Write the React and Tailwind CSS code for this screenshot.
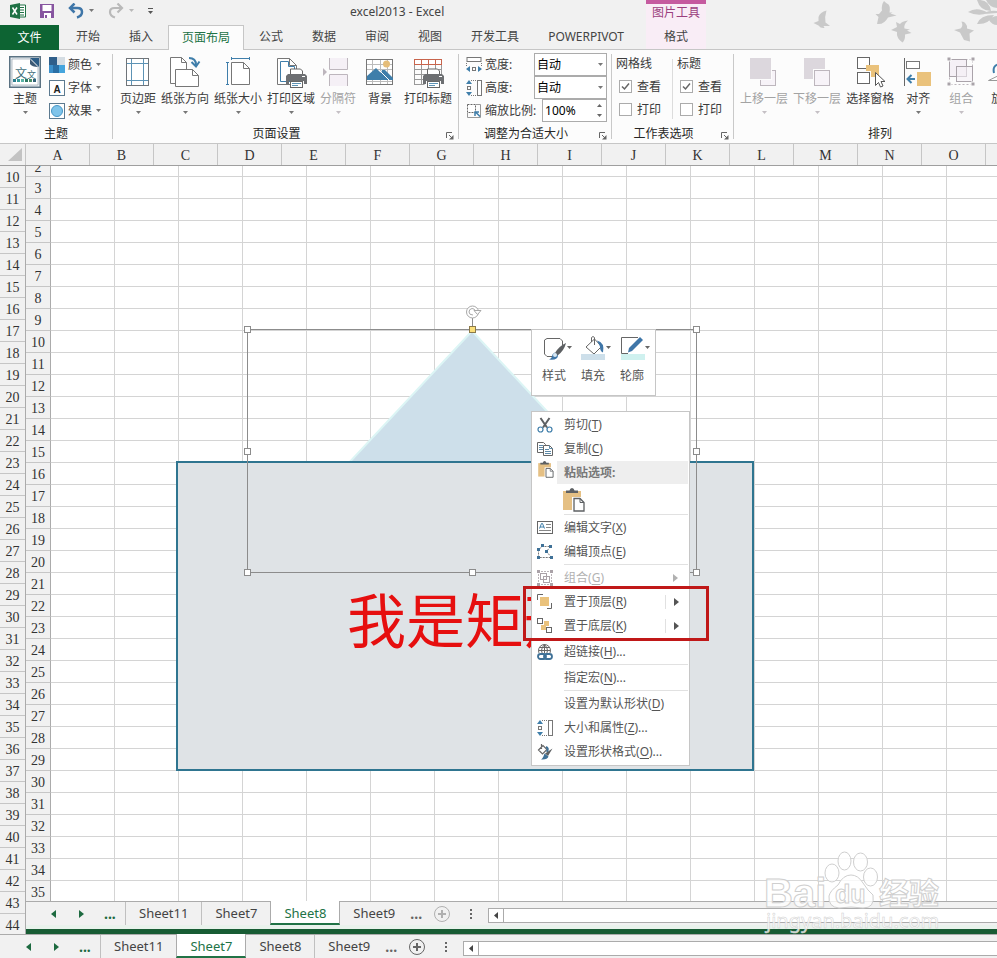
import React, { useState } from "react";

const COLUMNS = "ABCDEFGHIJKLMNOP".split("");
const OUTER_ROWS = Array.from({ length: 35 }, (_, i) => i + 10);
const INNER_ROWS = Array.from({ length: 33 }, (_, i) => i + 3);
const SHEETS = ["Sheet11", "Sheet7", "Sheet8", "Sheet9"];
const TABS = ["开始", "插入", "页面布局", "公式", "数据", "审阅", "视图", "开发工具", "POWERPIVOT"];

/* ---------- Small helpers ---------- */

const Svg = ({ size = 16, children, className = "" }) => (
    <svg
        width={size}
        height={size}
        viewBox={`0 0 ${size} ${size}`}
        fill="none"
        aria-hidden="true"
        className={`shrink-0 ${className}`}
    >
        {children}
    </svg>
);

const Caret = ({ className = "text-[#777]" }) => (
    <svg width="5" height="3" viewBox="0 0 5 3" aria-hidden="true" className={`shrink-0 ${className}`}>
        <path d="M0 0h5L2.500 3z" fill="currentColor" />
    </svg>
);

/* ---------- Ribbon icons (32px) ---------- */

const ThemeIcon = () => (
    <Svg size={32}>
        <rect x="0.750" y="0.750" width="30.500" height="30.500" fill="#e9eef2" stroke="#5b7282" strokeWidth="1.500" />
        <path d="M3 3h26v26H3z" fill="#fff" stroke="#8a98a3" strokeWidth="0.600" />
        <path d="M21 2h9v9z" fill="#2c5c85" />
        <path d="M21 3v5q2 3 8 3z" fill="#3d5a75" />
        <text x="6" y="21.500" fontSize="12" fill="#42707c">文</text>
        <text x="18" y="21.500" fontSize="9" fill="#42707c">文</text>
        <path d="M4 23h3v3H4z" fill="#2b7c8c" />
        <path d="M8 23h3v3H8z" fill="#3a9c9a" />
        <path d="M12 23h3v3h-3z" fill="#5ab3a5" />
        <path d="M16 23h3v3h-3z" fill="#2f7a64" />
        <path d="M20 23h3v3h-3z" fill="#4d8f67" />
        <path d="M24 23h3v3h-3z" fill="#34637a" />
    </Svg>
);

const MarginsIcon = () => (
    <Svg size={32}>
        <rect x="4.500" y="2.500" width="22" height="27" fill="#fff" stroke="#6f7479" />
        <path d="M9.500 3v26M21.500 3v26M5 7.500h21M5 24.500h21" stroke="#5d93b5" />
    </Svg>
);

const OrientationIcon = () => (
    <Svg size={32}>
        <path d="M1.500 1.500h11l5 5v21h-16z" fill="#fff" stroke="#777" />
        <path d="M12.500 1.500v5h5" stroke="#777" />
        <path d="M6.500 13.500h17l6 6v11h-23z" fill="#fff" stroke="#777" />
        <path d="M23.500 13.500v6h6" stroke="#777" />
        <path d="M20 2q7 0 7 7" stroke="#3f7eaa" strokeWidth="2" />
        <path d="M22.500 6l4.500 4.500L30.500 5.500" stroke="#3f7eaa" strokeWidth="2" />
    </Svg>
);

const PageSizeIcon = () => (
    <Svg size={32}>
        <path d="M9 2.500h19M9.500 1v3M27.500 1v3M5.500 6v23M4 6.500h3M4 28.500h3" stroke="#3f7eaa" />
        <path d="M9.500 6.500h12l6 6v16h-18z" fill="#fff" stroke="#777" />
        <path d="M21.500 6.500v6h6" stroke="#777" />
    </Svg>
);

const Printer = () => (
    <g>
        <path d="M15.500 20v-7h10l2 2v5z" fill="#fff" stroke="#666" />
        <path d="M13 18h17l2 2v8h-3v-3H14v3h-3v-8z" fill="#6d6f72" />
        <rect x="15.500" y="25.500" width="12" height="6" fill="#fff" stroke="#666" />
        <path d="M17 27.500h9M17 29.500h6" stroke="#5d93b5" />
        <path d="M27 20.500h3" stroke="#fff" />
    </g>
);

const PrintAreaIcon = () => (
    <Svg size={32}>
        <path d="M2.500 2.500h12l7 7v19h-19z" fill="#fff" stroke="#777" />
        <path d="M14.500 2.500v7h7" stroke="#777" />
        <path d="M5.500 5.500h8v5h6v15h-14z" stroke="#3f7eaa" />
        <Printer />
    </Svg>
);

const BreaksIcon = () => (
    <Svg size={32}>
        <path d="M7.500 2v11.500h18V2M7.500 30V18.500h18V30" fill="#f5f0f6" stroke="#bdb6bd" />
        <path d="M1 12l4 4-4 4z" fill="#bdb6bd" />
    </Svg>
);

const BackgroundIcon = () => (
    <Svg size={32}>
        <rect x="2.500" y="3.500" width="26" height="25" fill="#fff" stroke="#777" />
        <path d="M3 8.500h25M3 13.500h25M8.500 4v24M16.500 4v24M23.500 4v24M3 25.500h25" stroke="#bbb" />
        <circle cx="22.500" cy="8" r="3.500" fill="#e5bd79" />
        <path d="M3 24v-4l9-8 5 5 1-3 3 0 8 8v2z" fill="#3f7eaa" />
        <path d="M16 15l9 9" stroke="#fff" />
    </Svg>
);

const PrintTitlesIcon = () => (
    <Svg size={32}>
        <path d="M2.500 8v21M2.500 28.500h10M9.500 8v21M16.500 8v10M23.500 8v10M29.500 8v10M3 13.500h27M3 18.500h27M3 23.500h10" stroke="#999" />
        <rect x="2.500" y="3.500" width="27" height="5" fill="#fff" stroke="#c8644c" />
        <path d="M9.500 4v4M16.500 4v4M23.500 4v4" stroke="#c8644c" />
        <Printer />
    </Svg>
);

const ForwardIcon = () => (
    <Svg size={32}>
        <rect x="12.500" y="14.500" width="15" height="15" fill="#f7f3f8" stroke="#bdb6bd" />
        <path d="M1 1h23v23H1z" fill="#fcfcfc" />
        <path d="M2 2h21v21H2z" fill="#dcd7dd" />
    </Svg>
);

const BackwardIcon = () => (
    <Svg size={32}>
        <path d="M3 2h21v21H3z" fill="#dcd7dd" />
        <path d="M12 13h18v18H12z" fill="#fcfcfc" />
        <rect x="13.500" y="14.500" width="15" height="15" fill="#f7f3f8" stroke="#bdb6bd" />
    </Svg>
);

const SelectionPaneIcon = () => (
    <Svg size={32}>
        <rect x="3.500" y="1.500" width="12" height="11" fill="#fff" stroke="#666" />
        <rect x="3.500" y="16.500" width="12" height="11" fill="#fff" stroke="#666" />
        <path d="M12 9h13v12h-8v-6h-5z" fill="#eac27c" />
        <path d="M21.500 16.500v13l3-3 2 4.500 2.500-1-2-4.500h4z" fill="#fff" stroke="#555" />
    </Svg>
);

const AlignIcon = () => (
    <Svg size={32}>
        <path d="M2.500 2v28" stroke="#666" />
        <rect x="4.500" y="5.500" width="13" height="7" fill="#fff" stroke="#777" />
        <path d="M15 16h14v14H15z" fill="#eac27c" />
        <path d="M13 23H6M9.500 19L5.500 23l4 4" stroke="#3f7eaa" strokeWidth="2" />
    </Svg>
);

const GroupIcon = () => (
    <Svg size={32}>
        <path d="M4.500 3.500h23v25h-23z" stroke="#bdb6bd" strokeDasharray="2 2" />
        <rect x="4.500" y="3.500" width="17" height="17" fill="#f5f0f6" stroke="#aaa3aa" />
        <rect x="11.500" y="10.500" width="16" height="15" fill="#f5f0f6" fillOpacity="0.600" stroke="#aaa3aa" />
        <path d="M2 1h4v4H2zM26 1h4v4h-4zM2 26h4v4H2zM26 26h4v4h-4z" fill="#a9a3a9" stroke="#fcfcfc" />
    </Svg>
);

const RotateIcon = () => (
    <Svg size={32}>
        <path d="M7 17Q5 9 13 8" stroke="#3f7eaa" strokeWidth="2" />
        <path d="M1.500 24.500L17 17v7.500z" fill="#fff" stroke="#999" />
    </Svg>
);

/* ---------- 16px icons ---------- */

const ColorsIcon = () => (
    <Svg>
        <path d="M0 0h8v8H0z" fill="#2f5f8a" />
        <path d="M8 0h8v8H8z" fill="#d5dde3" />
        <path d="M0 8h4v8H0z" fill="#3c8fc9" />
        <path d="M4 8h6v8H4z" fill="#2a6fa5" />
        <path d="M10 8h6v8h-6z" fill="#45a5dd" />
    </Svg>
);

const FontsIcon = () => (
    <Svg>
        <rect x="0.500" y="0.500" width="15" height="15" fill="#fff" stroke="#5c7a90" />
        <text x="4.500" y="12.500" fontSize="10" fontWeight="700" fill="#222" fontFamily="Liberation Sans, sans-serif">A</text>
    </Svg>
);

const EffectsIcon = () => (
    <Svg>
        <rect x="0.500" y="0.500" width="15" height="15" fill="#fff" stroke="#5c7a90" />
        <circle cx="8" cy="8" r="5.500" fill="#7fc4ea" stroke="#4696c6" />
    </Svg>
);

const WidthIcon = () => (
    <Svg>
        <rect x="1" y="0.500" width="14" height="4" fill="#fff" stroke="#777" />
        <path d="M0.500 6v3M15.500 6v3" stroke="#777" strokeDasharray="1 1" />
        <path d="M0 12l4-3v6zM16 12l-4-3v6z" fill="#3f7eaa" />
        <rect x="6.500" y="10.500" width="3" height="3" stroke="#777" />
    </Svg>
);

const HeightIcon = () => (
    <Svg>
        <rect x="11.500" y="0.500" width="4" height="15" fill="#fff" stroke="#777" />
        <path d="M5 0.500h5M5 15.500h5" stroke="#777" strokeDasharray="1 1" />
        <path d="M3 0L0 4h6zM3 16l-3-4h6z" fill="#3f7eaa" />
        <rect x="1.500" y="6.500" width="3" height="3" stroke="#777" />
    </Svg>
);

const ScaleIcon = () => (
    <Svg>
        <path d="M10 1.500h4.500v13h-13V10" stroke="#999" />
        <rect x="1.500" y="1.500" width="8" height="8" fill="#fff" stroke="#666" strokeDasharray="2 1" />
        <path d="M14 13.500L9.500 9M9 13V9h4" stroke="#3f7eaa" strokeWidth="1.500" />
    </Svg>
);

const CutIcon = () => (
    <Svg>
        <path d="M3.500 1l6.500 9.500M12.500 1L6 10.500" stroke="#5d6063" strokeWidth="2" />
        <circle cx="3.500" cy="12.500" r="2.500" stroke="#3f7eaa" strokeWidth="1.200" />
        <circle cx="12.500" cy="12.500" r="2.500" stroke="#3f7eaa" strokeWidth="1.200" />
    </Svg>
);

const CopyIcon = () => (
    <Svg>
        <path d="M0.500 1.500h6l2 2v8h-8z" fill="#fff" stroke="#666" />
        <path d="M2 4.500h4M2 6.500h4M2 8.500h4" stroke="#5d8aa8" />
        <path d="M6.500 4.500h6l3 3v7h-9z" fill="#fff" stroke="#666" />
        <path d="M12.500 4.500v3h3M8 8.500h4M8 10.500h6M8 12.500h6" stroke="#5d8aa8" />
    </Svg>
);

const PasteIcon = ({ big }) => (
    <svg width={big ? 22 : 16} height={big ? 24 : 17} viewBox="0 0 22 24" fill="none" aria-hidden="true" className="shrink-0">
        <path d="M0 3h18v19H0z" fill="#e5c084" />
        <path d="M3 5V2.500h3.500Q7 0 9 0t2.500 2.500H15V5z" fill="#5d6063" />
        <path d="M9 9h13v15H9z" fill="#fff" />
        <path d="M11 10.500h6l4 4v8.500H11z" fill="#fff" stroke="#5d6063" strokeWidth="1.300" />
        <path d="M17 10.500v4h4" stroke="#5d6063" />
    </svg>
);

const EditTextIcon = () => (
    <Svg>
        <rect x="0.500" y="1.500" width="15" height="12" fill="#fff" stroke="#666" />
        <path d="M2.500 8.500l2-5h1l2 5M3 7h4" stroke="#3f7eaa" />
        <path d="M9 4.500h5M9 7.500h5M2 10.500h12" stroke="#888" />
    </Svg>
);

const EditPointsIcon = () => (
    <Svg>
        <path d="M1.500 13.500v-8l4-3h8l-4 5 5 6z" stroke="#777" strokeDasharray="2 1" />
        <path d="M0 4h3v3H0zM4 0h3v3H4zM12 1h3v3h-3zM8 6h3v3H8zM0 12h3v3H0zM13 12h3v3h-3z" fill="#3f7197" />
    </Svg>
);

const GroupSmallIcon = () => (
    <Svg>
        <rect x="3.500" y="3.500" width="6" height="6" stroke="#aaa2a8" />
        <rect x="6.500" y="6.500" width="6" height="6" stroke="#aaa2a8" />
        <path d="M0 0h3v3H0zM13 0h3v3h-3zM0 13h3v3H0zM13 13h3v3h-3z" fill="#aaa2a8" />
        <path d="M4 1.500h8M4 14.500h8M1.500 4v8M14.500 4v8" stroke="#bbb4b9" strokeDasharray="2 1" />
    </Svg>
);

const FrontIcon = () => (
    <Svg>
        <path d="M0.500 6V0.500H6M10 14.500h4.500V9" stroke="#666" />
        <path d="M3 3h9v9H3z" fill="#eac27c" />
    </Svg>
);

const BackIcon = () => (
    <Svg>
        <path d="M7 3h5v5H9v4H4V7h3z" fill="#eac27c" />
        <rect x="0.500" y="0.500" width="5" height="5" fill="#fff" stroke="#666" />
        <rect x="9.500" y="9.500" width="5" height="5" fill="#fff" stroke="#666" />
    </Svg>
);

const LinkIcon = () => (
    <Svg>
        <circle cx="7.500" cy="6.500" r="6" fill="#fff" stroke="#666" />
        <path d="M7.500 0.500v12M1.500 6.500h12M2.500 3.500h10M7.500 0.500q-6 6 0 12M7.500 0.500q6 6 0 12" stroke="#666" />
        <path d="M0 9h16v7H0z" fill="#fff" />
        <rect x="1" y="10" width="8" height="5" rx="2.500" stroke="#3f7197" strokeWidth="1.800" />
        <rect x="7" y="10" width="8" height="5" rx="2.500" stroke="#3f7197" strokeWidth="1.800" />
    </Svg>
);

const FormatShapeIcon = () => (
    <Svg>
        <path d="M1.500 6L6 1.500l4 4L5.500 10zM4.500 0v5" stroke="#666" strokeWidth="1.200" />
        <path d="M9 3q3 1 1 5" stroke="#3f7197" strokeWidth="2" />
        <path d="M15.500 4.500L11 12l-3-2.500z" fill="#5d6063" />
        <path d="M7.500 9.500l4 3q-1 3.500-7.500 3 2-1 3.500-6z" fill="#3f7197" />
    </Svg>
);

/* ---------- Ribbon ---------- */

const RibbonButton = ({ icon, label, disabled, noCaret, className = "" }) => (
    <button
        type="button"
        disabled={disabled}
        className={`flex shrink-0 flex-col items-center pt-[3px] whitespace-nowrap ${disabled ? "text-[#a3a3a3]" : "text-[#3b3b3b]"} ${className}`}
    >
        {icon}
        <span className="mt-px h-5 leading-5">{label}</span>
        {!noCaret && <Caret className={disabled ? "mt-[2px] text-[#c5c0c5]" : "mt-[2px] text-[#777]"} />}
    </button>
);

const RibbonGroup = ({ label, launcher, className = "", children }) => (
    <>
        <section className="flex shrink-0 flex-col pt-[3px]">
            <div className={`flex h-[72px] ${className}`}>{children}</div>
            <div className="flex h-[18px] items-center text-[#262626]">
                <span className="flex-1 text-center leading-4">{label}</span>
                {launcher && (
                    <button type="button" aria-label={`${label} 设置`} className="w-[18px] pt-1 pl-[6px]">
                        <svg width="8" height="8" viewBox="0 0 8 8" fill="none">
                            <path d="M0.500 6V0.500H6M3 3l3 3" stroke="#666" />
                            <path d="M7.500 3v4.500H3z" fill="#666" />
                        </svg>
                    </button>
                )}
            </div>
        </section>
        <div className="my-1 w-px shrink-0 bg-[#c9c9c9]" />
    </>
);

const MenuDrop = ({ icon, label }) => (
    <button type="button" className="flex h-[23px] items-center text-[#3b3b3b]">
        {icon}
        <span className="ml-[3px]">{label}</span>
        <Caret className="ml-1 text-[#777]" />
    </button>
);

const ScaleSelect = ({ id, icon, label }) => (
    <div className="flex h-[23px] items-center">
        {icon}
        <label htmlFor={id} className="ml-[3px] flex-1 text-[#3b3b3b]">{label}</label>
        <span className="relative flex items-center">
            <select id={id} className="h-[23px] w-[73px] appearance-none border border-[#ababab] bg-white pl-[2px] text-black outline-none">
                <option>自动</option>
                <option>1 页</option>
                <option>2 页</option>
            </select>
            <Caret className="pointer-events-none absolute right-1 text-[#777]" />
        </span>
    </div>
);

const Check = ({ label, group, defaultChecked }) => (
    <label className="flex h-[23px] items-center gap-[5px] text-[#3b3b3b]">
        <span className="relative flex">
            <input
                type="checkbox"
                aria-label={`${group} ${label}`}
                defaultChecked={defaultChecked}
                className="peer size-[13px] appearance-none border border-[#ababab] bg-white"
            />
            <svg viewBox="0 0 13 13" className="pointer-events-none absolute inset-0 hidden size-[13px] peer-checked:block" fill="none">
                <path d="M3 6.500L5.500 9 10 3.500" stroke="#666" strokeWidth="1.500" />
            </svg>
        </span>
        {label}
    </label>
);

const Ribbon = () => (
    <div className="flex h-[94px] shrink-0 overflow-hidden border-b border-[#c6c6c6] bg-[#fcfcfc]">
        <RibbonGroup label="主题" className="w-28 pl-[7px]">
            <RibbonButton icon={<ThemeIcon />} label="主题" className="w-9" />
            <div className="ml-[6px] flex flex-col">
                <MenuDrop icon={<ColorsIcon />} label="颜色" />
                <MenuDrop icon={<FontsIcon />} label="字体" />
                <MenuDrop icon={<EffectsIcon />} label="效果" />
            </div>
        </RibbonGroup>

        <RibbonGroup label="页面设置" launcher className="gap-[5px] pr-[6px] pl-[7px]">
            <RibbonButton icon={<MarginsIcon />} label="页边距" />
            <RibbonButton icon={<OrientationIcon />} label="纸张方向" />
            <RibbonButton icon={<PageSizeIcon />} label="纸张大小" />
            <RibbonButton icon={<PrintAreaIcon />} label="打印区域" />
            <RibbonButton icon={<BreaksIcon />} label="分隔符" disabled />
            <RibbonButton icon={<BackgroundIcon />} label="背景" noCaret className="w-[38px]" />
            <RibbonButton icon={<PrintTitlesIcon />} label="打印标题" noCaret />
        </RibbonGroup>

        <RibbonGroup label="调整为合适大小" launcher className="w-[152px] pr-1 pl-[7px]">
            <div className="flex flex-1 flex-col">
                <ScaleSelect id="page-width" icon={<WidthIcon />} label="宽度:" />
                <ScaleSelect id="page-height" icon={<HeightIcon />} label="高度:" />
                <div className="flex h-[23px] items-center">
                    <ScaleIcon />
                    <label htmlFor="page-scale" className="ml-[3px] flex-1 whitespace-nowrap text-[#3b3b3b]">缩放比例:</label>
                    <span className="flex h-[23px] w-[65px] items-center border border-[#ababab] bg-white">
                        <input id="page-scale" defaultValue="100%" className="w-12 flex-1 bg-transparent pl-[2px] text-black outline-none" />
                        <span className="flex flex-col gap-[2px] pr-1">
                            <button type="button" aria-label="增加" className="flex h-2 items-center">
                                <Caret className="rotate-180 text-[#666]" />
                            </button>
                            <button type="button" aria-label="减少" className="flex h-2 items-center">
                                <Caret className="text-[#666]" />
                            </button>
                        </span>
                    </span>
                </div>
            </div>
        </RibbonGroup>

        <RibbonGroup label="工作表选项" launcher className="w-[121px] pl-1">
            <div className="flex w-14 flex-col">
                <span className="h-[22px] leading-[22px] text-[#3b3b3b]">网格线</span>
                <div className="pl-[3px]">
                    <Check group="网格线" label="查看" defaultChecked />
                    <Check group="网格线" label="打印" />
                </div>
            </div>
            <div className="my-[6px] w-px bg-[#dcdcdc]" />
            <div className="flex flex-col pl-1">
                <span className="h-[22px] leading-[22px] text-[#3b3b3b]">标题</span>
                <div className="pl-[3px]">
                    <Check group="标题" label="查看" defaultChecked />
                    <Check group="标题" label="打印" />
                </div>
            </div>
        </RibbonGroup>

        <RibbonGroup label="排列" className="w-[292px] gap-[5px] pl-[6px]">
            <RibbonButton icon={<ForwardIcon />} label="上移一层" disabled />
            <RibbonButton icon={<BackwardIcon />} label="下移一层" disabled />
            <RibbonButton icon={<SelectionPaneIcon />} label="选择窗格" noCaret />
            <RibbonButton icon={<AlignIcon />} label="对齐" className="w-[38px]" />
            <RibbonButton icon={<GroupIcon />} label="组合" disabled className="w-[38px]" />
            <RibbonButton icon={<RotateIcon />} label="旋转" className="w-9" />
        </RibbonGroup>
    </div>
);

/* ---------- Title bar and tabs ---------- */

const QuickAccess = () => (
    <div className="flex items-center pl-[10px]">
        <Svg>
            <path d="M9 2h6.500v12H9z" fill="#fff" stroke="#1f7145" />
            <path d="M9 4.500h5M9 7h5M9 9.500h5M9 12h5" stroke="#1f7145" strokeWidth="1.200" />
            <path d="M0 2l10-2v16L0 14z" fill="#1f7145" />
            <path d="M2.500 4.500l4.500 7M7 4.500l-4.500 7" stroke="#fff" strokeWidth="1.500" />
        </Svg>
        <button type="button" aria-label="保存" className="ml-[14px]">
            <Svg size={14}>
                <path d="M0 0h14v14H0z" fill="#8755a0" />
                <path d="M2.500 1h9v6h-9z" fill="#fff" />
                <path d="M4 9h7v5H4z" fill="#fff" />
                <path d="M5 11h2v3H5z" fill="#8755a0" />
            </Svg>
        </button>
        <button type="button" aria-label="撤消" className="ml-[14px] flex items-center gap-[5px]">
            <Svg>
                <path d="M2 5h7.500q4.500 0 4.500 4t-5 5.500" stroke="#3f76a8" strokeWidth="2.500" />
                <path d="M6.500 0.500L2 5l4.500 4.500" stroke="#3f76a8" strokeWidth="2.500" />
            </Svg>
            <Caret />
        </button>
        <button type="button" aria-label="恢复" className="ml-[14px] flex items-center gap-[5px]">
            <Svg>
                <path d="M14 5H6.500Q2 5 2 9t5 5.500" stroke="#b9b9b9" strokeWidth="2.200" />
                <path d="M9.500 0.500L14 5 9.500 9.500" stroke="#b9b9b9" strokeWidth="2.200" />
            </Svg>
            <Caret className="text-[#b9b9b9]" />
        </button>
        <button type="button" aria-label="自定义快速访问工具栏" className="ml-[14px] flex flex-col items-center gap-[2px]">
            <span className="h-px w-[5px] bg-[#555]" />
            <Caret className="text-[#555]" />
        </button>
    </div>
);

const Birds = () => (
    <svg width="187" height="49" viewBox="810 0 187 49" fill="#c9c9c9" aria-hidden="true" className="ml-auto">
        <path d="M826.500 10.500Q820 12 818.500 17L818.500 21 813.500 23l5 2.500q2 3 6 2.500l-1-2h6.500q-2-2-4.500-3.500-1-6 1-12z" />
        <path d="M884 1q-3 4-2 9.500l-3 3.500-3.500 0 3 3-1.500 7q7 1 11-6.500l8.500-2-6-2 2-1h-3q1-6-1-8-3-2-4.500-3.500z" />
        <path d="M908 20.500q-6 .5-8 3.500l-4-2 1 5-6 3 6 2q-1 6 5.500 10.500 3-3 2.500-8l6.500-1.500-4.500-2.500 3-1-5.500-1q-1-4 3.500-8z" />
        <path d="M961.500 21.500q3 0 4 2 2 2 1.500 5l7 2-4.500 3 .5 8-6-1.500-4-7.500-6-2.500 6.500-1.500q3-2 1-7z" />
        <path d="M968 12q9-6 20 1-10 4-20-1zM977 0q12-1 14 11-11 0-14-11zM977 24q3-9 17-9-6 10-17 9zM986 0h11v8q-8-1-11-8zM989 20q4-4 8-4v9q-5 0-8-5zM984 13q6-3 13-2v2l-13 1z" />
    </svg>
);

const Header = () => {
    const [active, setActive] = useState("页面布局");

    return (
        <header className="flex h-[50px] shrink-0 overflow-hidden bg-[#f1f1f1]">
            <div className="flex w-[646px] shrink-0 flex-col">
                <div className="flex h-[25px] items-center pb-1">
                    <QuickAccess />
                    <h1 className="ml-auto w-[296px] pt-[2px] text-[#444]">excel2013 - Excel</h1>
                </div>
                <nav className="flex h-[25px] items-stretch gap-px border-b border-[#c6c6c6]">
                    <button type="button" className="mr-[2px] -mb-px w-[59px] bg-[#0d6433] text-white">文件</button>
                    {TABS.map((tab) => (
                        <button
                            key={tab}
                            type="button"
                            onClick={() => setActive(tab)}
                            className={
                                tab === active
                                    ? "-mb-px border border-b-0 border-[#c6c6c6] bg-[#fcfcfc] px-[13px] text-[#217346]"
                                    : "px-[14px] text-[#444]"
                            }
                        >
                            {tab}
                        </button>
                    ))}
                </nav>
            </div>
            <div className="flex w-[60px] shrink-0 flex-col items-center border-t-4 border-b border-t-[#c55a9f] border-b-[#c6c6c6] bg-[#f9edf6]">
                <span className="h-5 leading-[18px] text-[#9b3f7e]">图片工具</span>
                <button type="button" className="h-[25px] text-[#444]">格式</button>
            </div>
            <div className="flex flex-1 border-b border-[#c6c6c6]">
                <Birds />
            </div>
        </header>
    );
};

/* ---------- Sheet tab strip ---------- */

const SheetTabs = ({ active, dim, className = "" }) => (
    <div className={`flex h-6 shrink-0 items-stretch border-t border-[#ababab] bg-[#f1f1f1] ${className}`}>
        <div className="flex w-[99px] shrink-0 items-center pl-[25px] text-[#1d6a40]">
            <button type="button" aria-label="上一个">
                <svg width="5" height="8" viewBox="0 0 5 8"><path d="M5 0v8L0 4z" fill="currentColor" /></svg>
            </button>
            <button type="button" aria-label="下一个" className="ml-[23px]">
                <svg width="5" height="8" viewBox="0 0 5 8"><path d="M0 0v8l5-4z" fill="currentColor" /></svg>
            </button>
            <span className="ml-5 text-[14px] font-bold leading-5">...</span>
        </div>
        {SHEETS.map((sheet, i) => (
            <button
                key={sheet}
                type="button"
                className={
                    sheet === active
                        ? "-mt-px border-x border-b-2 border-x-[#ababab] border-b-[#217346] bg-white px-[13px] pt-px text-[13px] text-[#217346]"
                        : `${SHEETS[i - 1] !== active ? "border-l border-[#c0c0c0]" : ""} px-[13px] pb-[2px] text-[13px] text-[#444]`
                }
            >
                {sheet}
            </button>
        ))}
        <span className="ml-[2px] self-center text-[14px] font-bold leading-5 text-[#666]">...</span>
        <button type="button" aria-label="新工作表" className={dim ? "ml-3 text-[#b0b0b0]" : "ml-3 text-[#666]"}>
            <Svg>
                <circle cx="8" cy="8" r="7.500" stroke="currentColor" />
                <path d="M8 4v8M4 8h8" stroke="currentColor" strokeWidth="2" />
            </Svg>
        </button>
        <svg width="2" height="10" viewBox="0 0 2 10" className="ml-5 self-center" fill="#666" aria-hidden="true">
            <path d="M0 0h2v2H0zM0 4h2v2H0zM0 8h2v2H0z" />
        </svg>
        <div className="mt-[6px] ml-4 flex h-[15px] flex-1 border border-r-0 border-[#ababab] bg-white">
            <button type="button" aria-label="向左滚动" className="flex w-[15px] items-center justify-center border-r border-[#ababab] text-[#444]">
                <svg width="4" height="7" viewBox="0 0 4 7"><path d="M4 0v7L0 3.500z" fill="currentColor" /></svg>
            </button>
        </div>
    </div>
);

/* ---------- Context menu ---------- */

const MENU = [
    { icon: <CutIcon />, label: "剪切", hotkey: "T" },
    { icon: <CopyIcon />, label: "复制", hotkey: "C" },
    { header: true },
    { divider: true },
    { icon: <EditTextIcon />, label: "编辑文字", hotkey: "X" },
    { icon: <EditPointsIcon />, label: "编辑顶点", hotkey: "E" },
    { divider: true },
    { icon: <GroupSmallIcon />, label: "组合", hotkey: "G", sub: true, disabled: true },
    { icon: <FrontIcon />, label: "置于顶层", hotkey: "R", sub: true, split: true },
    { icon: <BackIcon />, label: "置于底层", hotkey: "K", sub: true, split: true },
    { divider: true },
    { icon: <LinkIcon />, label: "超链接", hotkey: "H", more: true },
    { divider: true },
    { label: "指定宏", hotkey: "N", more: true },
    { divider: true },
    { label: "设置为默认形状", hotkey: "D" },
    { icon: <HeightIcon />, label: "大小和属性", hotkey: "Z", more: true },
    { icon: <FormatShapeIcon />, label: "设置形状格式", hotkey: "O", more: true },
];

const MenuItem = ({ item }) => {
    if (item.divider) {
        return <div className="mr-px ml-8 h-[2px] border-t border-[#e1e1e1]" />;
    }
    if (item.header) {
        return (
            <div>
                <div className="flex h-6 items-start pl-[6px]">
                    <PasteIcon />
                    <span className="mr-px ml-[3px] h-[23px] flex-1 bg-[#eeeeee] pl-[7px] font-bold leading-[23px] text-[#777]">粘贴选项:</span>
                </div>
                <button type="button" aria-label="粘贴" className="ml-[31px] flex h-[29px] items-center">
                    <PasteIcon big />
                </button>
            </div>
        );
    }
    return (
        <button
            type="button"
            disabled={item.disabled}
            className={`flex h-6 w-full items-center pl-[5px] text-left whitespace-nowrap ${item.disabled ? "text-[#b1b1b1]" : "text-[#555]"}`}
        >
            <span className="mr-[11px] flex w-4 shrink-0">{item.icon}</span>
            <span>
                {item.label}(<u className="underline-offset-2">{item.hotkey}</u>){item.more && "..."}
            </span>
            {item.sub && (
                <span className={`ml-auto flex h-[14px] w-6 items-center pl-2 ${item.split ? "border-l border-[#e1e1e1]" : ""}`}>
                    <svg width="5" height="8" viewBox="0 0 5 8"><path d="M0 0v8l5-4z" fill="currentColor" /></svg>
                </span>
            )}
        </button>
    );
};

const ContextMenu = () => (
    <div className="absolute top-[245px] left-[505px] w-[159px] border border-[#c6c6c6] bg-white py-px">
        {MENU.map((item, i) => (
            <MenuItem key={i} item={item} />
        ))}
    </div>
);

const MiniButton = ({ icon, label }) => (
    <button type="button" className="flex w-[39px] shrink-0 flex-col items-start text-[#555]">
        <span className="flex items-center">
            {icon}
            <Caret className="mb-[6px] text-[#666]" />
        </span>
        <span className="h-5 leading-5">{label}</span>
    </button>
);

const MiniToolbar = () => (
    <div className="absolute top-[163px] left-[505px] flex w-[125px] border border-[#c6c6c6] bg-white pt-1 pb-[9px] pl-[10px]">
        <MiniButton
            label="样式"
            icon={
                <svg width="25" height="32" viewBox="0 0 25 32" fill="none">
                    <path d="M12 22.500H5L2.500 20V6L5 4.500h13L20.500 7v4" stroke="#666" />
                    <path d="M24 9q-7 3-11 10l2.500 2.500Q22 17 24 9z" fill="#5d6063" />
                    <path d="M12.500 18.500l3.500 3q0 5-9 4 3-1 3.500-5z" fill="#3f76a8" />
                    <circle cx="13" cy="21" r="2" fill="#d9e8f2" />
                </svg>
            }
        />
        <MiniButton
            label="填充"
            icon={
                <svg width="25" height="32" viewBox="0 0 25 32" fill="none">
                    <path d="M5 13l8.500-8 7 7.500-7.500 7.500z" fill="#fff" stroke="#666" />
                    <path d="M10.500 8V3.500q1.500-2 3 0V11" stroke="#666" />
                    <path d="M16 6.500q8 2 6 12-3-1-3-6z" fill="#3f76a8" />
                    <path d="M0 20h24v6H0z" fill="#cddfea" />
                </svg>
            }
        />
        <MiniButton
            label="轮廓"
            icon={
                <svg width="25" height="32" viewBox="0 0 25 32" fill="none">
                    <path d="M18 3.500H1.500v16H8" stroke="#666" />
                    <path d="M8 18.500l1-4.500L20 3l3 3-11 11z" fill="#3f76a8" />
                    <path d="M1 20h24v6H1z" fill="#cff1ef" />
                </svg>
            }
        />
    </div>
);

/* ---------- Drawing canvas over the cells ---------- */

const HANDLES = [
    [1, 1],
    [450, 1],
    [1, 123],
    [450, 123],
    [1, 244],
    [226, 244],
    [450, 244],
];

const Canvas = () => (
    <div className="absolute inset-0">
        <svg width="452" height="246" viewBox="0 0 452 246" className="absolute top-[162px] left-[220px]" aria-hidden="true">
            <path d="M226 3L451 244H1z" fill="#cddfea" stroke="#dcf5f5" strokeWidth="2" />
        </svg>

        <div className="absolute top-[295px] left-[150px] flex h-[310px] w-[578px] items-center justify-center border-2 border-[#2f7590] bg-[#dfe3e6] pt-2">
            <p className="text-[59px] leading-[80px] text-[#e60f0f]">我是矩形</p>
        </div>

        <svg width="458" height="272" viewBox="-3 -24 458 272" fill="none" className="absolute top-[139px] left-[218px]" aria-hidden="true">
            <rect x="0.500" y="0.500" width="449" height="243" stroke="#8c8c8c" />
            <path d="M225.500 0v-11" stroke="#8c8c8c" />
            <circle cx="225.500" cy="-17" r="6" stroke="#a8a8a8" fill="#fff" />
            <path d="M228.500 -18q-1-2.500-3.500-2.500-3 .5-3 3.500t4 3" stroke="#a8a8a8" />
            <path d="M227 -18.500h7l-3.500 4z" stroke="#a8a8a8" fill="#fff" />
            {HANDLES.map(([x, y]) => (
                <rect key={`${x}-${y}`} x={x - 3.5} y={y - 3.5} width="6" height="6" fill="#fff" stroke="#8c8c8c" />
            ))}
            <rect x="222.500" y="-2.500" width="6" height="6" fill="#fbdf7a" stroke="#8c7a4a" />
        </svg>

        <MiniToolbar />
        <ContextMenu />

        {/* callout around the ordering commands */}
        <div className="pointer-events-none absolute top-[420px] left-[497px] h-[55px] w-[186px] border-[3px] border-[#c01818]" />
    </div>
);

const Watermark = () => (
    <svg
        width="190"
        height="92"
        viewBox="760 846 190 92"
        fill="#fff"
        fillOpacity="0.8"
        stroke="#cfcfcf"
        strokeWidth="1"
        className="pointer-events-none absolute right-[47px] bottom-5"
        aria-hidden="true"
    >
        <ellipse cx="832" cy="873" rx="7" ry="9" />
        <ellipse cx="844.500" cy="861" rx="6.500" ry="9" />
        <ellipse cx="860.500" cy="862" rx="7" ry="9" />
        <ellipse cx="870.500" cy="877" rx="7" ry="9" />
        <path d="M851 875q7 0 12 8t10 12q2 13-10 13-12-2-24 0-11-1-10-12 1-5 9-11 5-10 13-10z" />
        <g fontWeight="700" fontFamily="Liberation Sans, sans-serif">
            <text x="764" y="907" fontSize="40">Bai</text>
            <text x="835" y="903" fontSize="25">du</text>
            <text x="879" y="904" fontSize="30" fontFamily="Noto Sans CJK SC, sans-serif">经验</text>
        </g>
        <text x="766" y="928" fontSize="20" fontFamily="Noto Sans, sans-serif" strokeWidth="0.500">jingyan.baidu.com</text>
    </svg>
);

const RowHeader = ({ n }) => (
    <div className="h-[22px] shrink-0 border-b border-[#c6c6c6] text-center leading-[23px]">{n}</div>
);

export default function App() {
    return (
        <div className="relative flex h-screen flex-col overflow-hidden bg-[#f1f1f1] font-['Noto_Sans','Noto_Sans_CJK_SC',sans-serif] text-[12px] leading-4">
            <Header />
            <Ribbon />

            {/* Column letters */}
            <div className="flex h-[22px] shrink-0 overflow-hidden border-b border-[#9f9f9f] bg-[#f1f1f1] font-['Liberation_Serif',serif] text-[14px] text-[#333]">
                <div className="flex w-[26px] shrink-0 items-end justify-end border-r border-[#c6c6c6] pr-[3px] pb-1">
                    <svg width="14" height="13" viewBox="0 0 14 13" fill="#c3c3c3" aria-hidden="true">
                        <path d="M14 0v13H0z" />
                    </svg>
                </div>
                {COLUMNS.map((c) => (
                    <div key={c} className="w-16 shrink-0 border-r border-[#c6c6c6] text-center leading-[23px]">{c}</div>
                ))}
            </div>

            <div className="flex min-h-0 flex-1">
                {/* Row numbers of the window behind */}
                <div className="flex w-[26px] shrink-0 flex-col overflow-hidden border-r border-[#ababab] font-['Liberation_Serif',serif] text-[14px] text-[#333]">
                    {OUTER_ROWS.map((n) => (
                        <RowHeader key={n} n={n} />
                    ))}
                </div>

                <div className="flex min-w-0 flex-1 flex-col">
                    <div className="relative min-h-0 flex-1 overflow-hidden bg-white">
                        <table className="w-[1049px] table-fixed border-separate border-spacing-0">
                            <tbody>
                                <tr className="h-[11px]">
                                    <th scope="row" className="w-[25px] border-r border-b border-[#c6c6c6] border-r-[#ababab] bg-[#f1f1f1] p-0 font-['Liberation_Serif',serif] text-[14px] font-normal text-[#333]">
                                        <div className="flex h-[10px] items-end justify-center overflow-hidden leading-[16px]">2</div>
                                    </th>
                                    {COLUMNS.map((c) => (
                                        <td key={c} className="w-16 border-r border-b border-[#d4d4d4] p-0" />
                                    ))}
                                </tr>
                                {INNER_ROWS.map((n) => (
                                    <tr key={n} className="h-[22px]">
                                        <th scope="row" className="border-r border-b border-[#c6c6c6] border-r-[#ababab] bg-[#f1f1f1] p-0 pt-[2px] font-['Liberation_Serif',serif] text-[14px] font-normal leading-[19px] text-[#333]">
                                            {n}
                                        </th>
                                        {COLUMNS.map((c) => (
                                            <td key={c} className="border-r border-b border-[#d4d4d4] p-0" />
                                        ))}
                                    </tr>
                                ))}
                            </tbody>
                        </table>
                        <Canvas />
                    </div>
                    <SheetTabs active="Sheet8" dim />
                    <div className="h-1 shrink-0 bg-[#e9f2ec]" />
                    <div className="h-[5px] shrink-0 bg-[#185c34]" />
                </div>
            </div>

            <SheetTabs active="Sheet7" className="pl-px" />
            <Watermark />
        </div>
    );
}
